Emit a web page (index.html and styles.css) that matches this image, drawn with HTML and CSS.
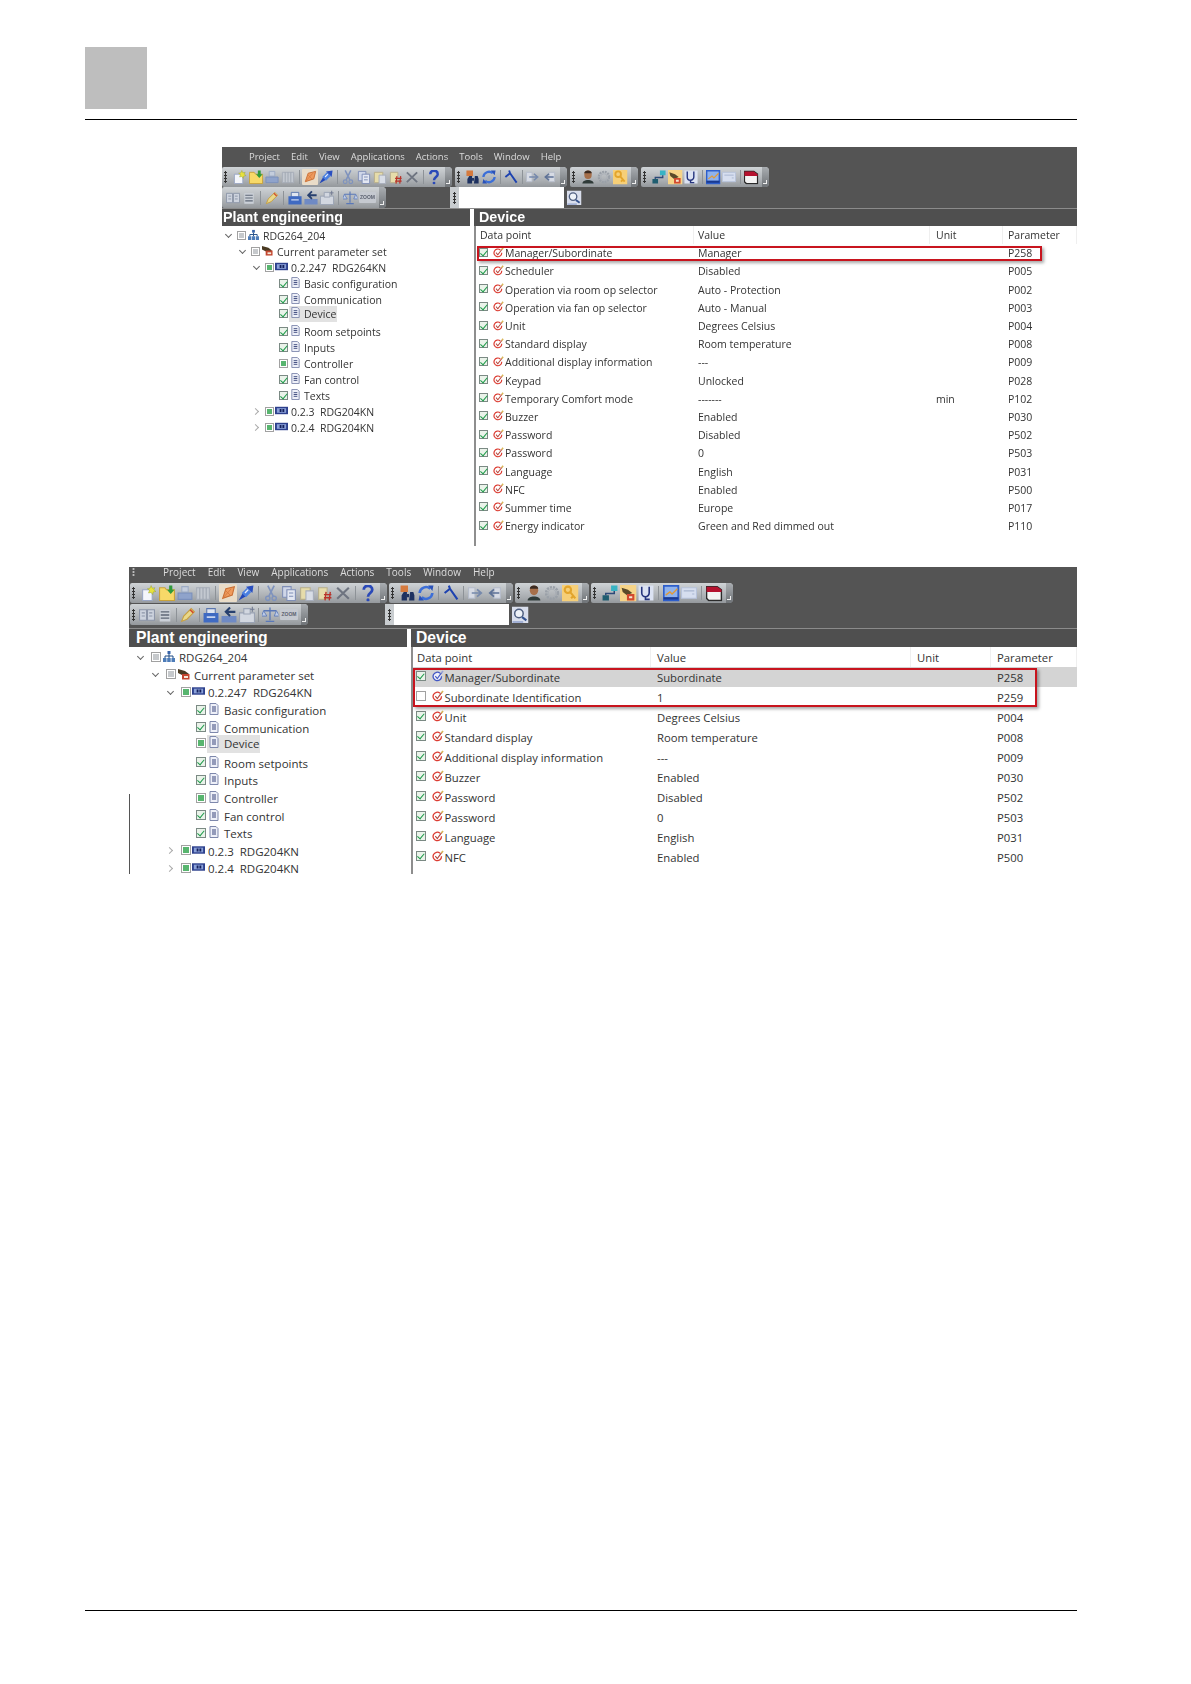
FILE: index.html
```html
<!DOCTYPE html>
<html lang="en">
<head>
<meta charset="utf-8">
<title>Plant engineering</title>
<link rel="stylesheet" href="styles.css">
</head>
<body>
<svg class="defs" aria-hidden="true">
  <symbol id="new" viewBox="0 0 16 16"><path d="M2 5h9v10H2z" fill="#f4f6fb" stroke="#9aa6c4"/><path d="M10 1l1 2.500 2.500-.5-1 2 2 1.500-2.500.5-.5 2.500-1.500-2-2.500.5 1-2.500-2-1.500 2.500-.5z" fill="#e8e23c" stroke="#8d9a2c" stroke-width=".4"/></symbol>
  <symbol id="folder" viewBox="0 0 16 16"><path d="M1 3h5l1.500 2H15v10H1z" fill="#f7d968" stroke="#c9a33a"/><path d="M10 1h3v4h2l-3.500 4L8 5h2z" fill="#2f9a3b"/></symbol>
  <symbol id="print" viewBox="0 0 16 16"><path d="M5 2h6v5H5z" fill="#c4cddc" stroke="#9cabc4"/><path d="M1.500 8h13v6h-13z" fill="#8fa3cb" stroke="#7b90bc"/></symbol>
  <symbol id="cols" viewBox="0 0 16 16"><path d="M2 3h12v11H2z" fill="#c3c8d0" stroke="#a6adb8"/><path d="M5 3v11M8 3v11M11 3v11" stroke="#9ea5b0"/></symbol>
  <symbol id="pin" viewBox="0 0 16 16"><path d="M3 13L6 4l8-2-2 8z" fill="#ee9a5c" stroke="#c96f35"/><path d="M3 13l8-9M6 6l4 4" stroke="#d5793f" stroke-width=".8"/></symbol>
  <symbol id="arrows" viewBox="0 0 16 16"><path d="M1 15l4-7 3 3z" fill="#2246b8"/><path d="M8 2l7-1-1 7z" fill="#2a4fc0"/><path d="M4 8l5-5 4 4-5 5z" fill="#4a7fe0"/><path d="M7 8l3-3" stroke="#e8eefc" stroke-width="1.200"/></symbol>
  <symbol id="cut" viewBox="0 0 16 16"><path d="M5 1l5 10M11 1L6 11" stroke="#7f93bd" stroke-width="1.600" fill="none"/><circle cx="5" cy="13" r="2" fill="none" stroke="#7f93bd" stroke-width="1.300"/><circle cx="11" cy="13" r="2" fill="none" stroke="#7f93bd" stroke-width="1.300"/></symbol>
  <symbol id="copy" viewBox="0 0 16 16"><path d="M2 2h8v10H2z" fill="#cfd6e8" stroke="#7f8eb6"/><path d="M6 5h8v10H6z" fill="#e3e7f2" stroke="#7f8eb6"/><path d="M8 8h4M8 11h4" stroke="#7f8eb6"/></symbol>
  <symbol id="paste" viewBox="0 0 16 16"><path d="M2 3h9v11H2z" fill="#e6dcaa" stroke="#b7ae8b"/><path d="M7 6h7v9H7z" fill="#d8dde6" stroke="#a7aebc"/></symbol>
  <symbol id="pastex" viewBox="0 0 16 16"><path d="M2 3h8v11H2z" fill="#e6dcaa" stroke="#b7ae8b"/><path d="M9 7l-1 8M13 7l-1 8M7 9.500h7M7 12.500h7" stroke="#b8332a" stroke-width="1.300"/></symbol>
  <symbol id="del" viewBox="0 0 16 16"><path d="M2.500 3l11 10.500M13.500 3L2.500 13.500" stroke="#6e7480" stroke-width="2"/></symbol>
  <symbol id="help" viewBox="0 0 16 16"><path d="M4 5c0-5 8-5 8 0 0 3-4 3-4 6.500" fill="none" stroke="#2a49b8" stroke-width="2.600"/><circle cx="8" cy="14.500" r="1.500" fill="#2a49b8"/></symbol>
  <symbol id="binoc" viewBox="0 0 16 16"><path d="M1 1h7v6H1z" fill="#d57a3e"/><path d="M4 7h3v8H2V10zM10 7h3l1 3v5H9z" fill="#1d3160"/><path d="M7 9h2v3H7z" fill="#1d3160"/></symbol>
  <symbol id="refresh" viewBox="0 0 16 16"><path d="M2 8a6 6 0 0 1 10-4" fill="none" stroke="#3c6fd8" stroke-width="2.400"/><path d="M14 8a6 6 0 0 1-10 4" fill="none" stroke="#3c6fd8" stroke-width="2.400"/><path d="M10 1l5 0-1 5zM6 15l-5 0 1-5z" fill="#2a52b8"/></symbol>
  <symbol id="wrench" viewBox="0 0 16 16"><path d="M2 8l5-4M7 4l7 10M7 4L6 1" stroke="#1d42b0" stroke-width="2" fill="none"/></symbol>
  <symbol id="right" viewBox="0 0 16 16"><path d="M1 3h6v10H1z" fill="#d7dbe4" stroke="#b5bcca"/><path d="M4 8h8M9 4.500L13 8l-4 3.500" fill="none" stroke="#7689ac" stroke-width="1.600"/></symbol>
  <symbol id="left" viewBox="0 0 16 16"><path d="M8 3h6v10H8z" fill="#d7dbe4" stroke="#b5bcca"/><path d="M13 8H4M8 4.500L4 8l4 3.500" fill="none" stroke="#5e7297" stroke-width="1.600"/></symbol>
  <symbol id="person" viewBox="0 0 16 16"><ellipse cx="8" cy="5.500" rx="4" ry="4.500" fill="#a66f4a"/><path d="M4 4c0-4 8-4 8 0z" fill="#3a2a20"/><path d="M2 15c0-5 12-5 12 0z" fill="#2f3a38"/></symbol>
  <symbol id="gear" viewBox="0 0 16 16"><circle cx="8" cy="8" r="5.500" fill="none" stroke="#9aa0a8" stroke-width="2.400" stroke-dasharray="2 .9"/><circle cx="8" cy="8" r="3.500" fill="none" stroke="#a9aeb5"/></symbol>
  <symbol id="key" viewBox="0 0 16 16"><path d="M0 0h16v16H0z" fill="#f6cf78"/><circle cx="6" cy="5" r="3" fill="none" stroke="#e3a52c" stroke-width="2"/><path d="M8 7l5 6M11 11l-2 2" stroke="#e3a52c" stroke-width="2"/></symbol>
  <symbol id="net" viewBox="0 0 16 16"><path d="M9 1h6v5H9z" fill="#38b3c4"/><path d="M1 10h6v5H1z" fill="#1f5d70"/><path d="M12 6v2.500H4V10" fill="none" stroke="#2d4a78" stroke-width="1.400"/></symbol>
  <symbol id="cat" viewBox="0 0 16 16"><path d="M0 0h16v16H0z" fill="#f6d488"/><path d="M2 3l6 2 4 3-5 2-4-3z" fill="#5a4a2a"/><path d="M7 9h7v6H7z" fill="#d2492f"/><path d="M9 11h3v2H9z" fill="#f4e6d0"/></symbol>
  <symbol id="steth" viewBox="0 0 16 16"><path d="M1 1h14v14H1z" fill="#dbe2f2"/><path d="M4 2v6a3.500 3.500 0 0 0 7 0V2M7.500 11v3h4" fill="none" stroke="#26357e" stroke-width="1.500"/></symbol>
  <symbol id="chart" viewBox="0 0 16 16"><path d="M0 0h16v16H0z" fill="#2d5ecb"/><path d="M2 2h12v10H2z" fill="#8fb2ec"/><path d="M3 10l4-3 2 2 5-5" fill="none" stroke="#e29a35" stroke-width="1.200"/><path d="M1 13h14" stroke="#1a3a90" stroke-width="2"/></symbol>
  <symbol id="panel" viewBox="0 0 16 16"><path d="M1 3h14v10H1z" fill="#d6deef" stroke="#b6c2da"/><path d="M3 6h10M11 9h2" stroke="#a8b5d0"/></symbol>
  <symbol id="red" viewBox="0 0 16 16"><path d="M1 2h10l4 3v10H3L1 13z" fill="#f4f4f4" stroke="#2a2a2a" stroke-width="1.400"/><path d="M1 2h10l4 3v2H1z" fill="#b5122f"/></symbol>
  <symbol id="book" viewBox="0 0 16 16"><path d="M1 3h6.500v10H1zM8.500 3H15v10H8.500z" fill="#cdd3de" stroke="#8c95a8"/><path d="M3 6h3M3 9h3M10 6h3M10 9h3" stroke="#8c95a8"/></symbol>
  <symbol id="list" viewBox="0 0 16 16"><path d="M3 3h10v11H3z" fill="#cbd0d8"/><path d="M4 5h8M4 8h8M4 11h8" stroke="#5d6675" stroke-width="1.200"/></symbol>
  <symbol id="pencil" viewBox="0 0 16 16"><path d="M2 14l2-5 7-7 3 3-7 7z" fill="#e9d88b" stroke="#c7a040"/><path d="M10 3l3 3" stroke="#d1482f" stroke-width="1.400"/></symbol>
  <symbol id="printer" viewBox="0 0 16 16"><path d="M4 2h8v5H4z" fill="#dfe5f0" stroke="#5c77ae"/><path d="M1 6h14v9H1z" fill="#3f6ac2"/><path d="M4 10h8" stroke="#c9d6f0" stroke-width="1.500"/></symbol>
  <symbol id="undo" viewBox="0 0 16 16"><path d="M1 9h14v6H1z" fill="#6f8ac4"/><path d="M14 5H6M9 1L5 5l4 4" fill="none" stroke="#27406f" stroke-width="2"/></symbol>
  <symbol id="docplus" viewBox="0 0 16 16"><path d="M1 6h14v9H1z" fill="#d2d7e0" stroke="#9aa3b4"/><path d="M5 2h6v5H5z" fill="#d2d7e0" stroke="#9aa3b4"/><path d="M13 0v5M11 2.500h4" stroke="#6f7890"/></symbol>
  <symbol id="scale" viewBox="0 0 16 16"><path d="M8 1v12M4 14h8M2 4h12" stroke="#5a78b8" stroke-width="1.200"/><path d="M2 4L0 9h5zM14 4l-2 5h5z" fill="#bdcbe6" stroke="#5a78b8" stroke-width=".8"/></symbol>
  <symbol id="lens" viewBox="0 0 16 16"><path d="M0 0h16v16H0z" fill="#d9deec"/><circle cx="7" cy="6.500" r="4" fill="#eef2f8" stroke="#4f5f80" stroke-width="1.400"/><path d="M10 10l4 3" stroke="#33528f" stroke-width="2"/><path d="M1 14.500h10" stroke="#8fa1cc" stroke-width="1.400"/></symbol>
  <symbol id="plant" viewBox="0 0 12 12"><path d="M4.500 1h3v3h-3z" fill="#3864a8"/><path d="M6 4v2M2 8V6h8v2M6 6v2" stroke="#1e4a84" fill="none"/><path d="M0 8h3.500v4H0zM4.200 8h3.500v4H4.200zM8.500 8H12v4H8.500z" fill="#4d7cb8"/></symbol>
  <symbol id="set" viewBox="0 0 12 12"><path d="M0 1l7 2 4 3-5 2-6-3z" fill="#4a3a22"/><path d="M4 6h7.500v5.500H4z" fill="#c2452e"/><path d="M6 8h4v2H6z" fill="#f4e8d8"/></symbol>
  <symbol id="board" viewBox="0 0 14 10"><path d="M0 1h14v8H0z" fill="#2c3f8c"/><path d="M2 2.500h10v5H2z" fill="#8aa0d8"/><path d="M5 3.500h2v3H5zM8 3.500h2v3H8z" fill="#14205c"/></symbol>
  <symbol id="page" viewBox="0 0 10 12"><path d="M1 .5h6l2 2v9H1z" fill="#eef0f8" stroke="#7e88ac"/><path d="M3 4h4M3 6h4M3 8h4" stroke="#39457a"/></symbol>
  <symbol id="dp" viewBox="0 0 12 12"><path d="M8 3.200A4.200 4.200 0 1 0 9.500 6.300" fill="none" stroke="#dc3c32" stroke-width="1.300"/><path d="M3.300 6.200l2 2.300L9.800 2.400" fill="none" stroke="#b5443a" stroke-width="1.100"/><path d="M8.800 2.400l1.500-2 1.400 1-1.700 2.200z" fill="#d9b65a"/></symbol>
  <symbol id="dpb" viewBox="0 0 12 12"><path d="M8 3.200A4.200 4.200 0 1 0 9.500 6.300" fill="#eef0fa" stroke="#4257c4" stroke-width="1.300"/><path d="M3.300 6.200l2 2.300L9.800 2.400" fill="none" stroke="#4257c4" stroke-width="1.100"/><path d="M8.800 2.400l1.500-2 1.400 1-1.700 2.200z" fill="#9aa4d8"/></symbol>
</svg>

<div class="page">
  <header class="head"><div class="square"></div></header>

  <section class="shot shot-a">
    <nav class="menu"><span>Project</span><span>Edit</span><span>View</span><span>Applications</span><span>Actions</span><span>Tools</span><span>Window</span><span>Help</span></nav>
    <div class="tools">
      <div class="strip">
        <i class="grip"></i>
        <svg class="ico"><use href="#new"/></svg><svg class="ico"><use href="#folder"/></svg><svg class="ico"><use href="#print"/></svg><svg class="ico"><use href="#cols"/></svg><i class="sep"></i>
        <svg class="ico on-w"><use href="#pin"/></svg><svg class="ico"><use href="#arrows"/></svg><i class="sep"></i>
        <svg class="ico"><use href="#cut"/></svg><svg class="ico"><use href="#copy"/></svg><svg class="ico"><use href="#paste"/></svg><svg class="ico"><use href="#pastex"/></svg><svg class="ico"><use href="#del"/></svg><i class="sep"></i>
        <svg class="ico"><use href="#help"/></svg><i class="handle"></i>
      </div>
      <div class="strip">
        <i class="grip"></i>
        <svg class="ico"><use href="#binoc"/></svg><svg class="ico"><use href="#refresh"/></svg><i class="sep"></i>
        <svg class="ico"><use href="#wrench"/></svg><i class="sep"></i>
        <svg class="ico"><use href="#right"/></svg><svg class="ico"><use href="#left"/></svg><i class="handle"></i>
      </div>
      <div class="strip">
        <i class="grip"></i>
        <svg class="ico"><use href="#person"/></svg><svg class="ico"><use href="#gear"/></svg><svg class="ico"><use href="#key"/></svg><i class="handle"></i>
      </div>
      <div class="strip">
        <i class="grip"></i>
        <svg class="ico"><use href="#net"/></svg><svg class="ico"><use href="#cat"/></svg><svg class="ico"><use href="#steth"/></svg><i class="sep"></i>
        <svg class="ico"><use href="#chart"/></svg><svg class="ico"><use href="#panel"/></svg><i class="sep"></i>
        <svg class="ico"><use href="#red"/></svg><i class="handle"></i>
      </div>
    </div>
    <div class="tools tools-2">
      <div class="strip">
        <svg class="ico"><use href="#book"/></svg><svg class="ico"><use href="#list"/></svg><i class="sep"></i>
        <svg class="ico"><use href="#pencil"/></svg><i class="sep"></i>
        <svg class="ico"><use href="#printer"/></svg><svg class="ico"><use href="#undo"/></svg><svg class="ico"><use href="#docplus"/></svg><i class="sep"></i>
        <svg class="ico"><use href="#scale"/></svg><span class="chip">ZOOM</span><i class="handle"></i>
      </div>
      <div class="search"><i class="grip"></i><span class="field"></span><svg class="ico lens"><use href="#lens"/></svg></div>
    </div>
    <div class="titles"><h2 class="title tree-title">Plant engineering</h2><h2 class="title device-title">Device</h2></div>
    <div class="content">
      <div class="tree">
        <div class="node lv0"><b class="chev open"></b><i class="cb gray"></i><span class="lab"><svg class="ti"><use href="#plant"/></svg>RDG264_204</span></div>
        <div class="node lv1"><b class="chev open"></b><i class="cb gray"></i><span class="lab"><svg class="ti"><use href="#set"/></svg>Current parameter set</span></div>
        <div class="node lv2"><b class="chev open"></b><i class="cb solid"></i><span class="lab"><svg class="ti"><use href="#board"/></svg>0.2.247&nbsp; RDG264KN</span></div>
        <div class="node lv3"><b class="chev"></b><i class="cb on"></i><span class="lab"><svg class="ti"><use href="#page"/></svg>Basic configuration</span></div>
        <div class="node lv3"><b class="chev"></b><i class="cb on"></i><span class="lab"><svg class="ti"><use href="#page"/></svg>Communication</span></div>
        <div class="node lv3 sel"><b class="chev"></b><i class="cb on"></i><span class="lab"><svg class="ti"><use href="#page"/></svg>Device</span></div>
        <div class="node lv3"><b class="chev"></b><i class="cb on"></i><span class="lab"><svg class="ti"><use href="#page"/></svg>Room setpoints</span></div>
        <div class="node lv3"><b class="chev"></b><i class="cb on"></i><span class="lab"><svg class="ti"><use href="#page"/></svg>Inputs</span></div>
        <div class="node lv3"><b class="chev"></b><i class="cb solid"></i><span class="lab"><svg class="ti"><use href="#page"/></svg>Controller</span></div>
        <div class="node lv3"><b class="chev"></b><i class="cb on"></i><span class="lab"><svg class="ti"><use href="#page"/></svg>Fan control</span></div>
        <div class="node lv3"><b class="chev"></b><i class="cb on"></i><span class="lab"><svg class="ti"><use href="#page"/></svg>Texts</span></div>
        <div class="node lv2"><b class="chev closed"></b><i class="cb solid"></i><span class="lab"><svg class="ti"><use href="#board"/></svg>0.2.3&nbsp; RDG204KN</span></div>
        <div class="node lv2"><b class="chev closed"></b><i class="cb solid"></i><span class="lab"><svg class="ti"><use href="#board"/></svg>0.2.4&nbsp; RDG204KN</span></div>
      </div>
      <div class="grid">
        <div class="row hdr"><span>Data point</span><span>Value</span><span>Unit</span><span>Parameter</span></div>
        <div class="rows">
          <div class="row"><span><i class="cb on"></i><svg class="di"><use href="#dp"/></svg>Manager/Subordinate</span><span>Manager</span><span></span><span>P258</span></div>
          <div class="row"><span><i class="cb on"></i><svg class="di"><use href="#dp"/></svg>Scheduler</span><span>Disabled</span><span></span><span>P005</span></div>
          <div class="row"><span><i class="cb on"></i><svg class="di"><use href="#dp"/></svg>Operation via room op selector</span><span>Auto - Protection</span><span></span><span>P002</span></div>
          <div class="row"><span><i class="cb on"></i><svg class="di"><use href="#dp"/></svg>Operation via fan op selector</span><span>Auto - Manual</span><span></span><span>P003</span></div>
          <div class="row"><span><i class="cb on"></i><svg class="di"><use href="#dp"/></svg>Unit</span><span>Degrees Celsius</span><span></span><span>P004</span></div>
          <div class="row"><span><i class="cb on"></i><svg class="di"><use href="#dp"/></svg>Standard display</span><span>Room temperature</span><span></span><span>P008</span></div>
          <div class="row"><span><i class="cb on"></i><svg class="di"><use href="#dp"/></svg>Additional display information</span><span>---</span><span></span><span>P009</span></div>
          <div class="row"><span><i class="cb on"></i><svg class="di"><use href="#dp"/></svg>Keypad</span><span>Unlocked</span><span></span><span>P028</span></div>
          <div class="row"><span><i class="cb on"></i><svg class="di"><use href="#dp"/></svg>Temporary Comfort mode</span><span>-------</span><span>min</span><span>P102</span></div>
          <div class="row"><span><i class="cb on"></i><svg class="di"><use href="#dp"/></svg>Buzzer</span><span>Enabled</span><span></span><span>P030</span></div>
          <div class="row"><span><i class="cb on"></i><svg class="di"><use href="#dp"/></svg>Password</span><span>Disabled</span><span></span><span>P502</span></div>
          <div class="row"><span><i class="cb on"></i><svg class="di"><use href="#dp"/></svg>Password</span><span>0</span><span></span><span>P503</span></div>
          <div class="row"><span><i class="cb on"></i><svg class="di"><use href="#dp"/></svg>Language</span><span>English</span><span></span><span>P031</span></div>
          <div class="row"><span><i class="cb on"></i><svg class="di"><use href="#dp"/></svg>NFC</span><span>Enabled</span><span></span><span>P500</span></div>
          <div class="row"><span><i class="cb on"></i><svg class="di"><use href="#dp"/></svg>Summer time</span><span>Europe</span><span></span><span>P017</span></div>
          <div class="row"><span><i class="cb on"></i><svg class="di"><use href="#dp"/></svg>Energy indicator</span><span>Green and Red dimmed out</span><span></span><span>P110</span></div>
          <div class="callout"></div>
        </div>
      </div>
    </div>
  </section>

  <section class="shot shot-b">
    <nav class="menu"><span class="menu-grip"></span><span>Project</span><span>Edit</span><span>View</span><span>Applications</span><span>Actions</span><span>Tools</span><span>Window</span><span>Help</span></nav>
    <div class="tools">
      <div class="strip">
        <i class="grip"></i>
        <svg class="ico"><use href="#new"/></svg><svg class="ico"><use href="#folder"/></svg><svg class="ico"><use href="#print"/></svg><svg class="ico"><use href="#cols"/></svg><i class="sep"></i>
        <svg class="ico on-w"><use href="#pin"/></svg><svg class="ico"><use href="#arrows"/></svg><i class="sep"></i>
        <svg class="ico"><use href="#cut"/></svg><svg class="ico"><use href="#copy"/></svg><svg class="ico"><use href="#paste"/></svg><svg class="ico"><use href="#pastex"/></svg><svg class="ico"><use href="#del"/></svg><i class="sep"></i>
        <svg class="ico"><use href="#help"/></svg><i class="handle"></i>
      </div>
      <div class="strip">
        <i class="grip"></i>
        <svg class="ico"><use href="#binoc"/></svg><svg class="ico"><use href="#refresh"/></svg><i class="sep"></i>
        <svg class="ico"><use href="#wrench"/></svg><i class="sep"></i>
        <svg class="ico"><use href="#right"/></svg><svg class="ico"><use href="#left"/></svg><i class="handle"></i>
      </div>
      <div class="strip">
        <i class="grip"></i>
        <svg class="ico"><use href="#person"/></svg><svg class="ico"><use href="#gear"/></svg><svg class="ico"><use href="#key"/></svg><i class="handle"></i>
      </div>
      <div class="strip">
        <i class="grip"></i>
        <svg class="ico"><use href="#net"/></svg><svg class="ico"><use href="#cat"/></svg><svg class="ico"><use href="#steth"/></svg><i class="sep"></i>
        <svg class="ico"><use href="#chart"/></svg><svg class="ico"><use href="#panel"/></svg><i class="sep"></i>
        <svg class="ico"><use href="#red"/></svg><i class="handle"></i>
      </div>
    </div>
    <div class="tools tools-2">
      <div class="strip">
        <i class="grip"></i>
        <svg class="ico"><use href="#book"/></svg><svg class="ico"><use href="#list"/></svg><i class="sep"></i>
        <svg class="ico"><use href="#pencil"/></svg><i class="sep"></i>
        <svg class="ico"><use href="#printer"/></svg><svg class="ico"><use href="#undo"/></svg><svg class="ico"><use href="#docplus"/></svg><i class="sep"></i>
        <svg class="ico"><use href="#scale"/></svg><span class="chip">ZOOM</span><i class="handle"></i>
      </div>
      <div class="search"><i class="grip"></i><span class="field"></span><svg class="ico lens"><use href="#lens"/></svg></div>
    </div>
    <div class="titles"><h2 class="title tree-title">Plant engineering</h2><h2 class="title device-title">Device</h2></div>
    <div class="content">
      <div class="tree">
        <div class="node lv0"><b class="chev open"></b><i class="cb gray"></i><span class="lab"><svg class="ti"><use href="#plant"/></svg>RDG264_204</span></div>
        <div class="node lv1"><b class="chev open"></b><i class="cb gray"></i><span class="lab"><svg class="ti"><use href="#set"/></svg>Current parameter set</span></div>
        <div class="node lv2"><b class="chev open"></b><i class="cb solid"></i><span class="lab"><svg class="ti"><use href="#board"/></svg>0.2.247&nbsp; RDG264KN</span></div>
        <div class="node lv3"><b class="chev"></b><i class="cb on"></i><span class="lab"><svg class="ti"><use href="#page"/></svg>Basic configuration</span></div>
        <div class="node lv3"><b class="chev"></b><i class="cb on"></i><span class="lab"><svg class="ti"><use href="#page"/></svg>Communication</span></div>
        <div class="node lv3 sel"><b class="chev"></b><i class="cb solid"></i><span class="lab"><svg class="ti"><use href="#page"/></svg>Device</span></div>
        <div class="node lv3"><b class="chev"></b><i class="cb on"></i><span class="lab"><svg class="ti"><use href="#page"/></svg>Room setpoints</span></div>
        <div class="node lv3"><b class="chev"></b><i class="cb on"></i><span class="lab"><svg class="ti"><use href="#page"/></svg>Inputs</span></div>
        <div class="node lv3"><b class="chev"></b><i class="cb solid"></i><span class="lab"><svg class="ti"><use href="#page"/></svg>Controller</span></div>
        <div class="node lv3"><b class="chev"></b><i class="cb on"></i><span class="lab"><svg class="ti"><use href="#page"/></svg>Fan control</span></div>
        <div class="node lv3"><b class="chev"></b><i class="cb on"></i><span class="lab"><svg class="ti"><use href="#page"/></svg>Texts</span></div>
        <div class="node lv2"><b class="chev closed"></b><i class="cb solid"></i><span class="lab"><svg class="ti"><use href="#board"/></svg>0.2.3&nbsp; RDG204KN</span></div>
        <div class="node lv2"><b class="chev closed"></b><i class="cb solid"></i><span class="lab"><svg class="ti"><use href="#board"/></svg>0.2.4&nbsp; RDG204KN</span></div>
      </div>
      <div class="grid">
        <div class="row hdr"><span>Data point</span><span>Value</span><span>Unit</span><span>Parameter</span></div>
        <div class="rows">
          <div class="row picked"><span><i class="cb on"></i><svg class="di"><use href="#dpb"/></svg>Manager/Subordinate</span><span>Subordinate</span><span></span><span>P258</span></div>
          <div class="row"><span><i class="cb"></i><svg class="di"><use href="#dp"/></svg>Subordinate Identification</span><span>1</span><span></span><span>P259</span></div>
          <div class="row"><span><i class="cb on"></i><svg class="di"><use href="#dp"/></svg>Unit</span><span>Degrees Celsius</span><span></span><span>P004</span></div>
          <div class="row"><span><i class="cb on"></i><svg class="di"><use href="#dp"/></svg>Standard display</span><span>Room temperature</span><span></span><span>P008</span></div>
          <div class="row"><span><i class="cb on"></i><svg class="di"><use href="#dp"/></svg>Additional display information</span><span>---</span><span></span><span>P009</span></div>
          <div class="row"><span><i class="cb on"></i><svg class="di"><use href="#dp"/></svg>Buzzer</span><span>Enabled</span><span></span><span>P030</span></div>
          <div class="row"><span><i class="cb on"></i><svg class="di"><use href="#dp"/></svg>Password</span><span>Disabled</span><span></span><span>P502</span></div>
          <div class="row"><span><i class="cb on"></i><svg class="di"><use href="#dp"/></svg>Password</span><span>0</span><span></span><span>P503</span></div>
          <div class="row"><span><i class="cb on"></i><svg class="di"><use href="#dp"/></svg>Language</span><span>English</span><span></span><span>P031</span></div>
          <div class="row"><span><i class="cb on"></i><svg class="di"><use href="#dp"/></svg>NFC</span><span>Enabled</span><span></span><span>P500</span></div>
          <div class="callout"></div>
        </div>
      </div>
    </div>
  </section>

  <footer class="foot"></footer>
</div>
</body>
</html>
```

FILE: styles.css
```css
* { box-sizing: border-box; }
html, body { margin: 0; padding: 0; background: #fff; }
.defs { display: none; }

.page {
  min-height: 1684px;
  padding: 47px 114px 0 85px;
  display: flex;
  flex-direction: column;
  align-items: flex-end;
}
.head {
  align-self: stretch;
  padding-bottom: 10px;
  border-bottom: 1px solid #000;
}
.square { width: 62px; height: 62px; background: #bebebe; }
.foot {
  align-self: stretch;
  margin-top: auto;
  height: 74px;
  border-top: 1px solid #000;
}

/* ---------- screenshot variants ---------- */
.shot {
  background: #545454;
  font-family: "Open Sans", "Noto Sans", sans-serif;
  color: #333;
  display: flex;
  flex-direction: column;
  filter: blur(.35px);
}
.shot-a {
  --fs: 10.5px; --fs-grid: 10.5px; --menu-fs: 9.5px; --ico: 16px; --bar: 20px;
  --tree-row: 16px; --tree-pad: 0px; --indent: 14px; --chev-gap: 3px;
  --cb: 9px; --ti: 11px; --row: 18.2px; --di: 11px; --di-l: 4.500px; --di-r: 1.500px;
  --col-1: 218px; --col-2: 236px; --col-3: 73px;
  --menu-h: 20px; --menu-gap: 11px; --menu-start: 27px;
  width: 855px; height: 399px; margin-top: 27px;
}
.shot-b {
  --fs: 11.5px; --fs-grid: 11.3px; --menu-fs: 10px; --ico: 18px; --bar: 20px;
  --tree-row: 17.6px; --tree-pad: 5px; --indent: 15px; --chev-gap: 5px;
  --cb: 10px; --ti: 12px; --row: 20px; --di: 12px; --di-l: 5.500px; --di-r: 1px;
  --col-1: 238px; --col-2: 260px; --col-3: 80px;
  --menu-h: 16px; --menu-gap: 12px; --menu-start: 3px;
  width: 948px; height: 307px; margin-top: 21px;
}

/* ---------- menu ---------- */
.menu {
  height: var(--menu-h);
  flex: none;
  display: flex;
  align-items: center;
  gap: var(--menu-gap);
  padding-left: var(--menu-start);
  font-size: var(--menu-fs);
  color: #dcdcdc;
  line-height: 10px;
}
.shot-b .menu { padding-bottom: 6px; }
.menu-grip {
  width: 3px; height: 8px;
  margin-right: 16px;
  background: radial-gradient(circle at 1.500px 1px, #bbb 1px, transparent 1.200px) 0 0 / 3px 3px repeat-y;
}

/* ---------- toolbars ---------- */
.tools { display: flex; height: var(--bar); flex: none; gap: 2px; }
.tools-2 { height: 21px; gap: 0; }
.shot-a .tools { gap: 3px; }
.shot-a .tools-2 { gap: 0; }
.shot-b .tools { padding-left: 1px; }
.shot-b .tools-2 { margin-top: 1px; }

.strip {
  display: flex;
  align-items: center;
  height: 100%;
  padding-left: 2px;
  background: linear-gradient(#cfd3d6, #a9adb1 70%, #94989c);
  border-radius: 2px 4px 4px 2px;
}
.grip {
  width: 6px; height: 12px; flex: none;
  margin-right: 2px;
  background: radial-gradient(circle at 1.500px 1.500px, #333 1px, transparent 1.200px) 0 0 / 3px 3px repeat-y;
}
.ico { width: var(--ico); height: var(--ico); flex: none; display: block; padding: .5px; }
.on-w { background: #e9dcc8; border-radius: 1px; }
.sep { width: 1px; height: 14px; flex: none; margin: 0 3px; background: #8d9297; }
.shot-a .tools:first-of-type .sep { margin: 0 2.500px; }
.handle {
  width: 7px; height: 100%; flex: none; margin-left: 3px;
  border-radius: 0 4px 4px 0;
  background: linear-gradient(#a9adb1, #6f7377);
  position: relative;
}
.handle::after {
  content: "";
  position: absolute;
  right: 2px; bottom: 3px;
  width: 3px; height: 3px;
  border-right: 1px solid #eee;
  border-bottom: 1px solid #eee;
}
.chip {
  height: 11px; flex: none;
  background: #c5c9d0;
  color: #5c6270;
  font: 700 5px/11px "Liberation Sans", sans-serif;
  text-align: center;
  border-radius: 1px;
  margin-left: 1px;
}
.shot-a .chip { width: 17px; }
.shot-b .chip { width: 18px; }
.shot-a .tools-2 .strip { padding-left: 3px; }
.shot-b .tools-2 .grip { margin-right: 0; }
.shot-b .tools-2 .sep { margin: 0 2px; }

.search {
  display: flex;
  align-items: center;
  height: 100%;
  background: linear-gradient(90deg, #c9cdd0 9px, transparent 9px);
}
.shot-a .search { margin-left: 64px; }
.shot-b .search { margin-left: 77px; }
.search .grip { margin: 0 0 0 3px; }
.field { background: #fff; height: 100%; display: block; }
.shot-a .field { width: 105px; }
.shot-b .field { width: 115px; }
.lens { margin-left: 2px; }

/* ---------- title bands ---------- */
.titles {
  display: grid;
  grid-template-columns: 248px 1fr;
  column-gap: 4px;
  border-top: 1px solid #8b8b8b;
  flex: none;
  height: 18px;
  color: #fff;
  background: #fff;
}
.shot-b .titles {
  grid-template-columns: 278px 1fr;
  margin-top: 3px;
  height: 19px;
}
.title {
  margin: 0;
  background: #4f4f4f;
  font: 700 14.300px/17px "Liberation Sans", sans-serif;
  padding-left: 1px;
}
.shot-b .title { font-size: 15.700px; line-height: 18px; padding-left: 7px; }
.device-title { padding-left: 5px; }
.shot-b .device-title { padding-left: 5px; }

/* ---------- content ---------- */
.content {
  flex: 1;
  min-height: 0;
  overflow: hidden;
  background: #fff;
  display: grid;
  grid-template-columns: 252px 1fr;
}
.shot-b .content { grid-template-columns: 282px 1fr; }

.tree { padding-top: 2px; font-size: var(--fs); position: relative; }
.shot-b .tree::before {
  content: "";
  position: absolute;
  left: 0; top: 147px; bottom: 0;
  width: 1px;
  background: #555;
}
.node {
  height: var(--tree-row);
  display: flex;
  align-items: center;
  padding-left: calc(var(--tree-pad) + var(--lv) * var(--indent));
  white-space: nowrap;
}
.lv0 { --lv: 0; } .lv1 { --lv: 1; } .lv2 { --lv: 2; } .lv3 { --lv: 3; }
.node.sel { margin-top: -2px; margin-bottom: 2px; }
.chev {
  width: 12px; height: 12px; flex: none;
  margin-right: var(--chev-gap);
  position: relative;
}
.chev.open::before, .chev.closed::before {
  content: "";
  position: absolute;
  left: 4px; top: 2px;
  width: 4px; height: 4px;
  border-right: 1px solid #666;
  border-bottom: 1px solid #666;
  transform: rotate(45deg);
}
.chev.closed::before {
  left: 3px; top: 3px;
  border-color: #aaa;
  transform: rotate(-45deg);
}
.lab {
  display: flex;
  align-items: center;
  height: 100%;
  margin-left: 1px;
  padding: 0 1px;
  flex: none;
}
.ti {
  width: var(--ti); height: var(--ti);
  flex: none;
  margin-right: 3px;
  margin-top: -3px;
}
.lv0 .ti, .lv1 .ti { margin-right: 4px; }
.lv2 .ti { width: 13px; margin-left: -1px; margin-right: 3px; }
.shot-b .lv3 .ti { margin-right: 4px; }
.sel .lab { background: #e2e2e2; }

.cb {
  display: block;
  width: var(--cb); height: var(--cb);
  flex: none;
  margin-top: -2px;
  border: 1px solid #a1a1a1;
  background: #fff;
  position: relative;
}
.cb.gray::after, .cb.solid::after {
  content: "";
  position: absolute;
  inset: 1px;
  background: #c6c9cc;
}
.cb.solid::after { background: #58b56f; }
.cb.on { border-color: #7b8a84; background: #eaf3ea; }
.cb.on::after {
  content: "";
  position: absolute;
  left: 2px; top: 0;
  width: 3px; height: 5.500px;
  border-right: 1.500px solid #1c9a48;
  border-bottom: 1.500px solid #1c9a48;
  transform: rotate(40deg);
}

/* ---------- data grid ---------- */
.grid {
  border-left: 2px solid #8e8e8e;
  font-size: var(--fs-grid);
}
.row {
  display: grid;
  grid-template-columns: var(--col-1) var(--col-2) var(--col-3) 1fr;
  height: var(--row);
  align-items: center;
  white-space: nowrap;
}
.row > span { display: flex; align-items: center; padding-left: 6px; height: 100%; }
.row > span:first-child { padding-left: 3px; }
.hdr > span { border-right: 1px solid #efefef; }
.hdr > span:first-child { padding-left: 4px; }
.shot-a .row > span:nth-child(2) { padding-left: 4px; }
.shot-a .row > span:nth-child(4) { padding-left: 5px; }
.rows { position: relative; }
.picked { background: #d4d4d4; }
.di { width: var(--di); height: var(--di); flex: none; margin: -2px var(--di-r) 0 var(--di-l); }
.callout {
  position: absolute;
  border: 2px solid #c8141e;
  box-shadow: 2px 2px 3px rgba(0, 0, 0, .35);
  pointer-events: none;
}
.shot-a .callout { left: 1px; right: 35px; top: 2px; height: 15px; }
.shot-b .callout { left: 0; right: 40px; top: 1px; height: 39px; }
```
